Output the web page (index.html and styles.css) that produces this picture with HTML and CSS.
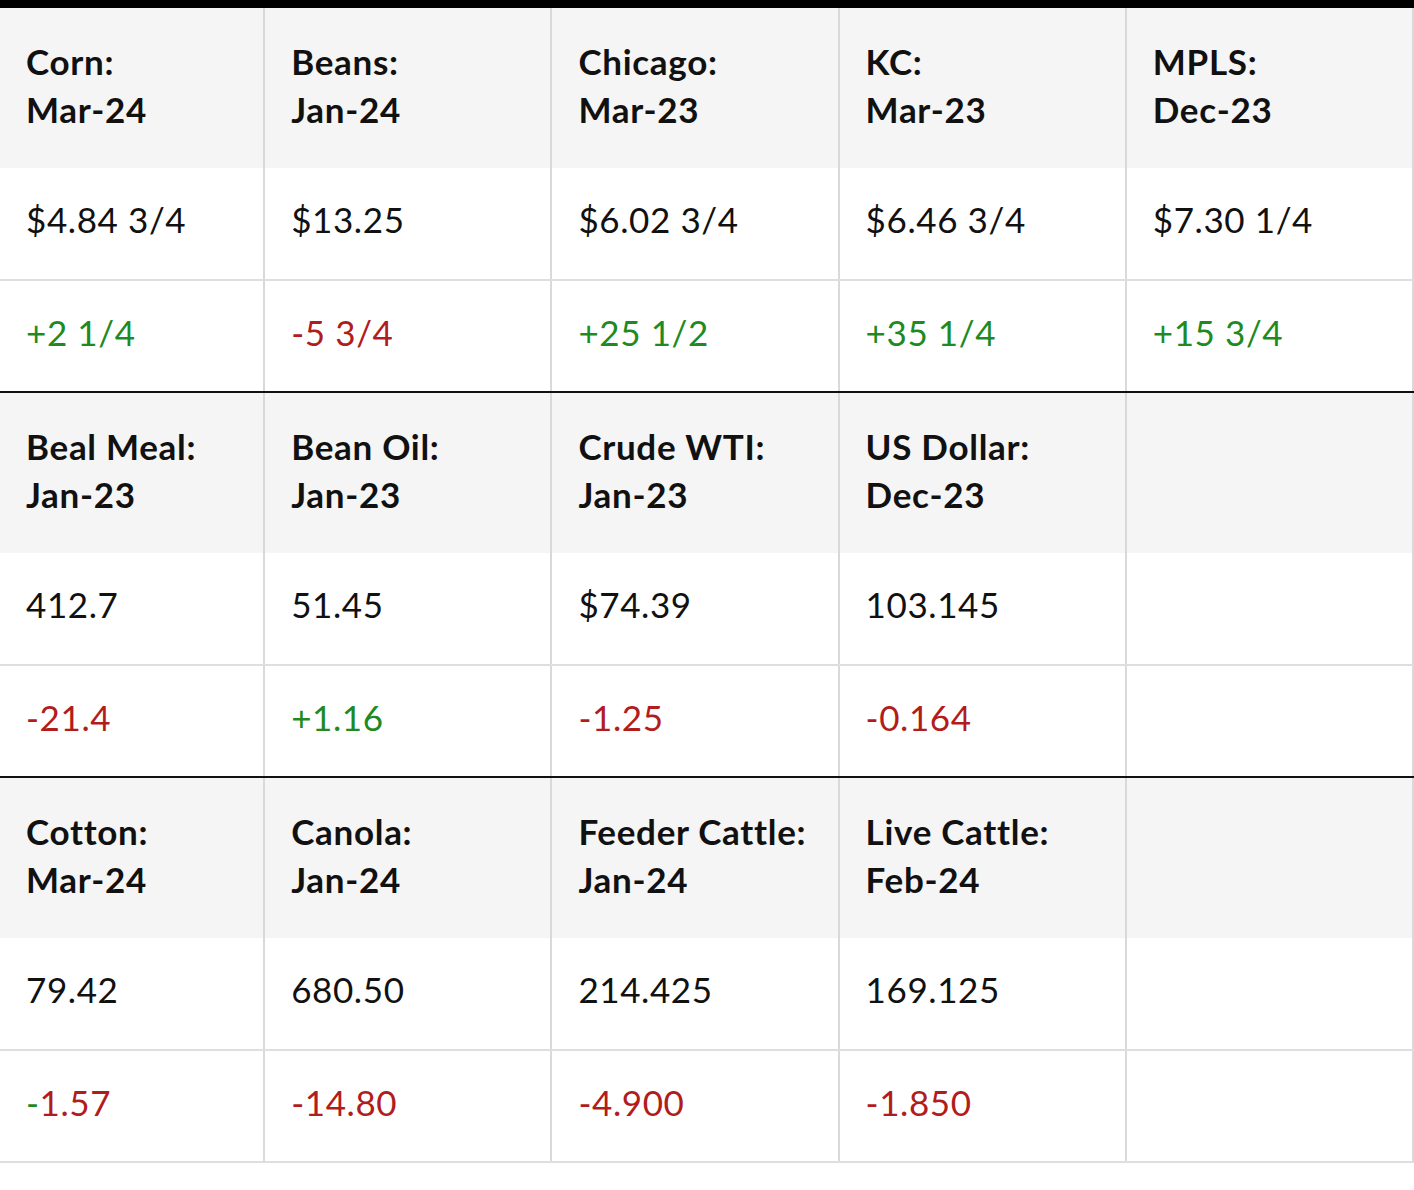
FILE: index.html
```html
<!DOCTYPE html>
<html lang="en">
<head>
<meta charset="utf-8">
<title>Markets</title>
<link rel="stylesheet" href="styles.css">
</head>
<body>
<table class="quotes">
  <colgroup>
    <col class="c1"><col class="c"><col class="c"><col class="c"><col class="c">
  </colgroup>
  <tbody class="group">
    <tr class="head">
      <td>Corn:<br>Mar-24</td>
      <td>Beans:<br>Jan-24</td>
      <td>Chicago:<br>Mar-23</td>
      <td>KC:<br>Mar-23</td>
      <td>MPLS:<br>Dec-23</td>
    </tr>
    <tr class="val">
      <td>$4.84 3/4</td>
      <td>$13.25</td>
      <td>$6.02 3/4</td>
      <td>$6.46 3/4</td>
      <td>$7.30 1/4</td>
    </tr>
    <tr class="chg">
      <td class="up">+2 1/4</td>
      <td class="down">-5 3/4</td>
      <td class="up">+25 1/2</td>
      <td class="up">+35 1/4</td>
      <td class="up">+15 3/4</td>
    </tr>
  </tbody>
  <tbody class="group">
    <tr class="head">
      <td>Beal Meal:<br>Jan-23</td>
      <td>Bean Oil:<br>Jan-23</td>
      <td>Crude WTI:<br>Jan-23</td>
      <td>US Dollar:<br>Dec-23</td>
      <td></td>
    </tr>
    <tr class="val">
      <td>412.7</td>
      <td>51.45</td>
      <td>$74.39</td>
      <td>103.145</td>
      <td></td>
    </tr>
    <tr class="chg">
      <td class="down">-21.4</td>
      <td class="up">+1.16</td>
      <td class="down">-1.25</td>
      <td class="down">-0.164</td>
      <td></td>
    </tr>
  </tbody>
  <tbody class="group last">
    <tr class="head">
      <td>Cotton:<br>Mar-24</td>
      <td>Canola:<br>Jan-24</td>
      <td>Feeder Cattle:<br>Jan-24</td>
      <td>Live Cattle:<br>Feb-24</td>
      <td></td>
    </tr>
    <tr class="val">
      <td>79.42</td>
      <td>680.50</td>
      <td>214.425</td>
      <td>169.125</td>
      <td></td>
    </tr>
    <tr class="chg">
      <td class="down"><span class="up">-</span>1.57</td>
      <td class="down">-14.80</td>
      <td class="down">-4.900</td>
      <td class="down">-1.850</td>
      <td></td>
    </tr>
  </tbody>
</table>
</body>
</html>
```
FILE: styles.css
```css
html, body {
  margin: 0;
  padding: 0;
  background: #ffffff;
}

body {
  font-family: "Lato", "Noto Sans", sans-serif;
  color: #111111;
}

.quotes {
  border-collapse: collapse;
  table-layout: fixed;
  width: 1414px;
  border-top: 8px solid #000000;
}

.quotes .c1 { width: 264px; }
.quotes .c { width: 287px; }

.quotes td {
  padding: 0 10px 0 26px;
  font-size: 35px;
  letter-spacing: 0.6px;
  line-height: 48px;
  vertical-align: middle;
  border-left: 2px solid #d9d9d9;
  border-right: 2px solid #d9d9d9;
  border-bottom: 2px solid #dedede;
  text-align: left;
  white-space: nowrap;
}

.quotes td:first-child {
  border-left: none;
}

.head td {
  height: 154px;
  background: #f5f5f5;
  font-weight: 700;
  letter-spacing: 0.7px;
  border-bottom: none;
  padding-bottom: 6px;
}

.val td {
  height: 101px;
  padding-bottom: 10px;
}

.chg td {
  height: 102px;
  padding-bottom: 8px;
  border-bottom: 2px solid #111111;
}

.last .chg td {
  border-bottom: 2px solid #dedede;
}

.up { color: #1f8a1f; }
.down { color: #b11c1c; }
```
